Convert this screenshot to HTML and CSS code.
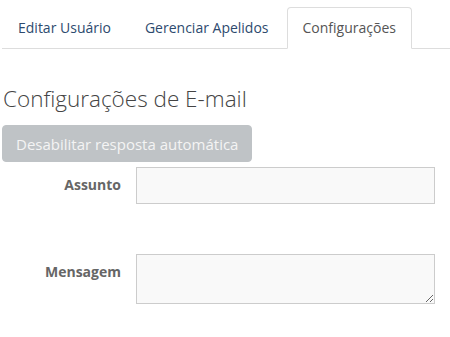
FILE: index.html
```html
<!DOCTYPE html>
<html lang="pt">
<head>
<meta charset="utf-8">
<link rel="stylesheet" href="styles.css">
</head>
<body>
<div class="page">
  <ul class="tabs">
    <li class="tab"><a>Editar Usuário</a></li>
    <li class="tab"><a>Gerenciar Apelidos</a></li>
    <li class="tab active"><a>Configurações</a></li>
  </ul>
  <div class="content">
    <h3 class="title">Configurações de E-mail</h3>
    <button class="btn" disabled>Desabilitar resposta automática</button>
    <form class="form">
      <div class="row">
        <label class="label">Assunto</label>
        <input class="input" type="text">
      </div>
      <div class="row row-msg">
        <label class="label">Mensagem</label>
        <textarea class="textarea"></textarea>
      </div>
    </form>
  </div>
</div>
</body>
</html>
```
FILE: styles.css
```css
* { box-sizing: border-box; }
html, body { margin: 0; padding: 0; background: #fff; }
body {
  font-family: "Open Sans", "Liberation Sans", sans-serif;
  font-size: 14px;
  line-height: 20px;
  color: #555;
}
.page { padding: 7px 0 0 2px; }
.tabs {
  list-style: none;
  margin: 0;
  padding: 0;
  display: flex;
  border-bottom: 1px solid #ddd;
}
.tab { margin-right: 2px; margin-bottom: -1px; }
.tab a {
  display: block;
  padding: 10px 15px;
  border: 1px solid transparent;
  border-radius: 4px 4px 0 0;
  color: #2d4a6e;
  cursor: pointer;
}
.tab.active a {
  color: #555;
  background: #fff;
  border-color: #ddd #ddd transparent #ddd;
}
.title {
  margin: 38px 0 0 1px;
  font-size: 22.5px;
  line-height: 24px;
  font-weight: 300;
  color: #444;
}
.btn {
  margin-top: 14px;
  display: block;
  width: 250px;
  height: 37px;
  padding: 0 13px;
  font-family: inherit;
  font-size: 15px;
  white-space: nowrap;
  color: #f4f4f4;
  background: #bfc3c6;
  border: 1px solid #bfc3c6;
  border-radius: 4px;
  text-align: left;
}
.form { margin-top: 5px; }
.row {
  display: grid;
  grid-template-columns: 119px 299px;
  column-gap: 15px;
}
.row-msg { margin-top: 50px; }
.label {
  text-align: right;
  font-weight: 700;
  color: #666;
  padding-top: 8px;
}
.input, .textarea {
  display: block;
  width: 299px;
  background: #f9f9f9;
  border: 1px solid #ccc;
  border-radius: 0;
  font-family: inherit;
  font-size: 14px;
}
.input { height: 37px; }
.textarea { height: 50px; resize: both; }
```
